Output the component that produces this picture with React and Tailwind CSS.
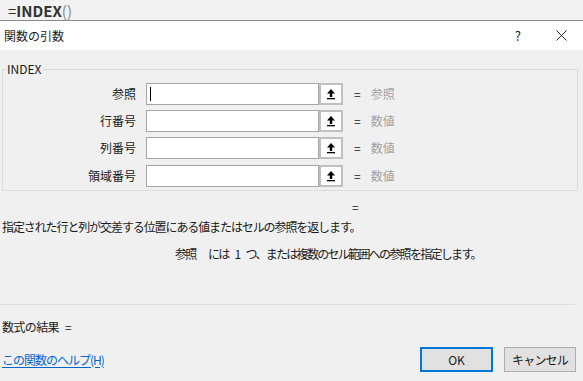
import React from 'react';

const FONT = { fontFamily: '"Noto Sans CJK JP", "Noto Sans", sans-serif' };

// Args of INDEX
const ARGS = [
  { label: "参照", value: "参照", focused: true },
  { label: "行番号", value: "数値" },
  { label: "列番号", value: "数値" },
  { label: "領域番号", value: "数値" },
];

const RefIcon = () => (
  <svg width="12" height="12" viewBox="0 0 12 12">
    <path d="M6 1 L10 5.5 L7.2 5.5 L7.2 9 L4.8 9 L4.8 5.5 L2 5.5 Z" fill="#000" />
    <rect x="2" y="10" width="8" height="1.3" fill="#000" />
  </svg>
);

const ArgRow = ({ arg }) => (
  <div className="flex items-center h-[22px]">
    <div className="w-[133px] text-right text-[12px] leading-none text-[#1a1a1a]">{arg.label}</div>
    <div className="ml-[10px] flex h-[22px]">
      <div className="w-[173px] h-full bg-white border border-[#a6a6a6] flex items-center pl-[3px]">
        {arg.focused && <div className="w-px h-[14px] bg-black" />}
      </div>
      <div className="w-[24px] h-full border-2 border-[#c0c0c0] bg-white flex items-center justify-center">
        <RefIcon />
      </div>
    </div>
    <div className="ml-[11px] text-[12px] leading-none text-[#1a1a1a]">=</div>
    <div className="ml-[10px] text-[12px] leading-none text-[#a3a3a3]">{arg.value}</div>
  </div>
);

const App = () => {
  return (
    <div className="w-[583px] h-[381px] bg-[#f0f0f0] flex flex-col overflow-hidden text-[#1a1a1a]" style={FONT}>
      {/* formula bar */}
      <div className="h-[21px] bg-[#f2f2f2] border-b border-[#8a8a8a] flex items-center pl-[8px] pt-[1px]">
        <span className="text-[15px] leading-[18px] text-[#333]">=</span>
        <span className="text-[15px] font-bold leading-[18px] text-[#333]">INDEX</span>
        <span className="text-[15px] leading-[18px] text-[#888]">()</span>
      </div>

      {/* title bar */}
      <div className="h-[29px] bg-white flex items-center justify-between pl-[4px] pr-[16px]">
        <span className="text-[12px] leading-none">関数の引数</span>
        <div className="flex items-center gap-[35px]">
          <span className="text-[13px] leading-none">?</span>
          <svg width="11" height="11" viewBox="0 0 11 11">
            <path d="M0.5 0.5 L10.5 10.5 M10.5 0.5 L0.5 10.5" stroke="#222" strokeWidth="1" />
          </svg>
        </div>
      </div>

      {/* group box */}
      <fieldset className="ml-[2px] mr-[5px] mt-[13px] border border-[#dcdcdc] rounded-[1px] h-[128px] pt-[8px]">
        <legend className="ml-[3px] px-[1px] text-[12px] leading-none text-[#1a1a1a]">INDEX</legend>
        <div className="flex flex-col gap-[5.2px]">
          {ARGS.map(a => <ArgRow key={a.label} arg={a} />)}
        </div>
      </fieldset>

      <div className="mt-[10px] pl-[352px] text-[12px] leading-none">=</div>
      <div className="mt-[8px] pl-[2px] text-[12px] leading-none tracking-[-1.1px]">指定された行と列が交差する位置にある値またはセルの参照を返します。</div>
      <div className="mt-[15px] pl-[175px] flex items-baseline text-[12px] leading-none tracking-[-1.7px]">
        <span className="w-[33px]">参照</span>
        <span>には</span>
        <span className="ml-[6px]">1</span>
        <span className="ml-[6px]">つ、または複数のセル範囲への参照を指定します。</span>
      </div>

      <div className="mt-[44px] mr-[8px] border-t border-[#dcdcdc]" />
      <div className="mt-[16px] pl-[2px] flex text-[12px] leading-none tracking-[-0.6px]">
        <span>数式の結果</span>
        <span className="ml-[6px]">=</span>
      </div>

      <div className="mt-[14px] flex items-center pl-[2px] pr-[7px]">
        <a className="text-[12px] leading-none text-[#0066cc] underline underline-offset-2 tracking-[-1px]">この関数のヘルプ(H)</a>
        <div className="ml-auto flex gap-[11px]">
          <button className="w-[73px] h-[25px] bg-[#e1e1e1] border-2 border-[#0078d7] text-[12px] leading-none">OK</button>
          <button className="w-[72px] h-[25px] bg-[#e1e1e1] border border-[#adadad] text-[12px] leading-none tracking-[-0.8px]">キャンセル</button>
        </div>
      </div>
    </div>
  );
};

export default App;
